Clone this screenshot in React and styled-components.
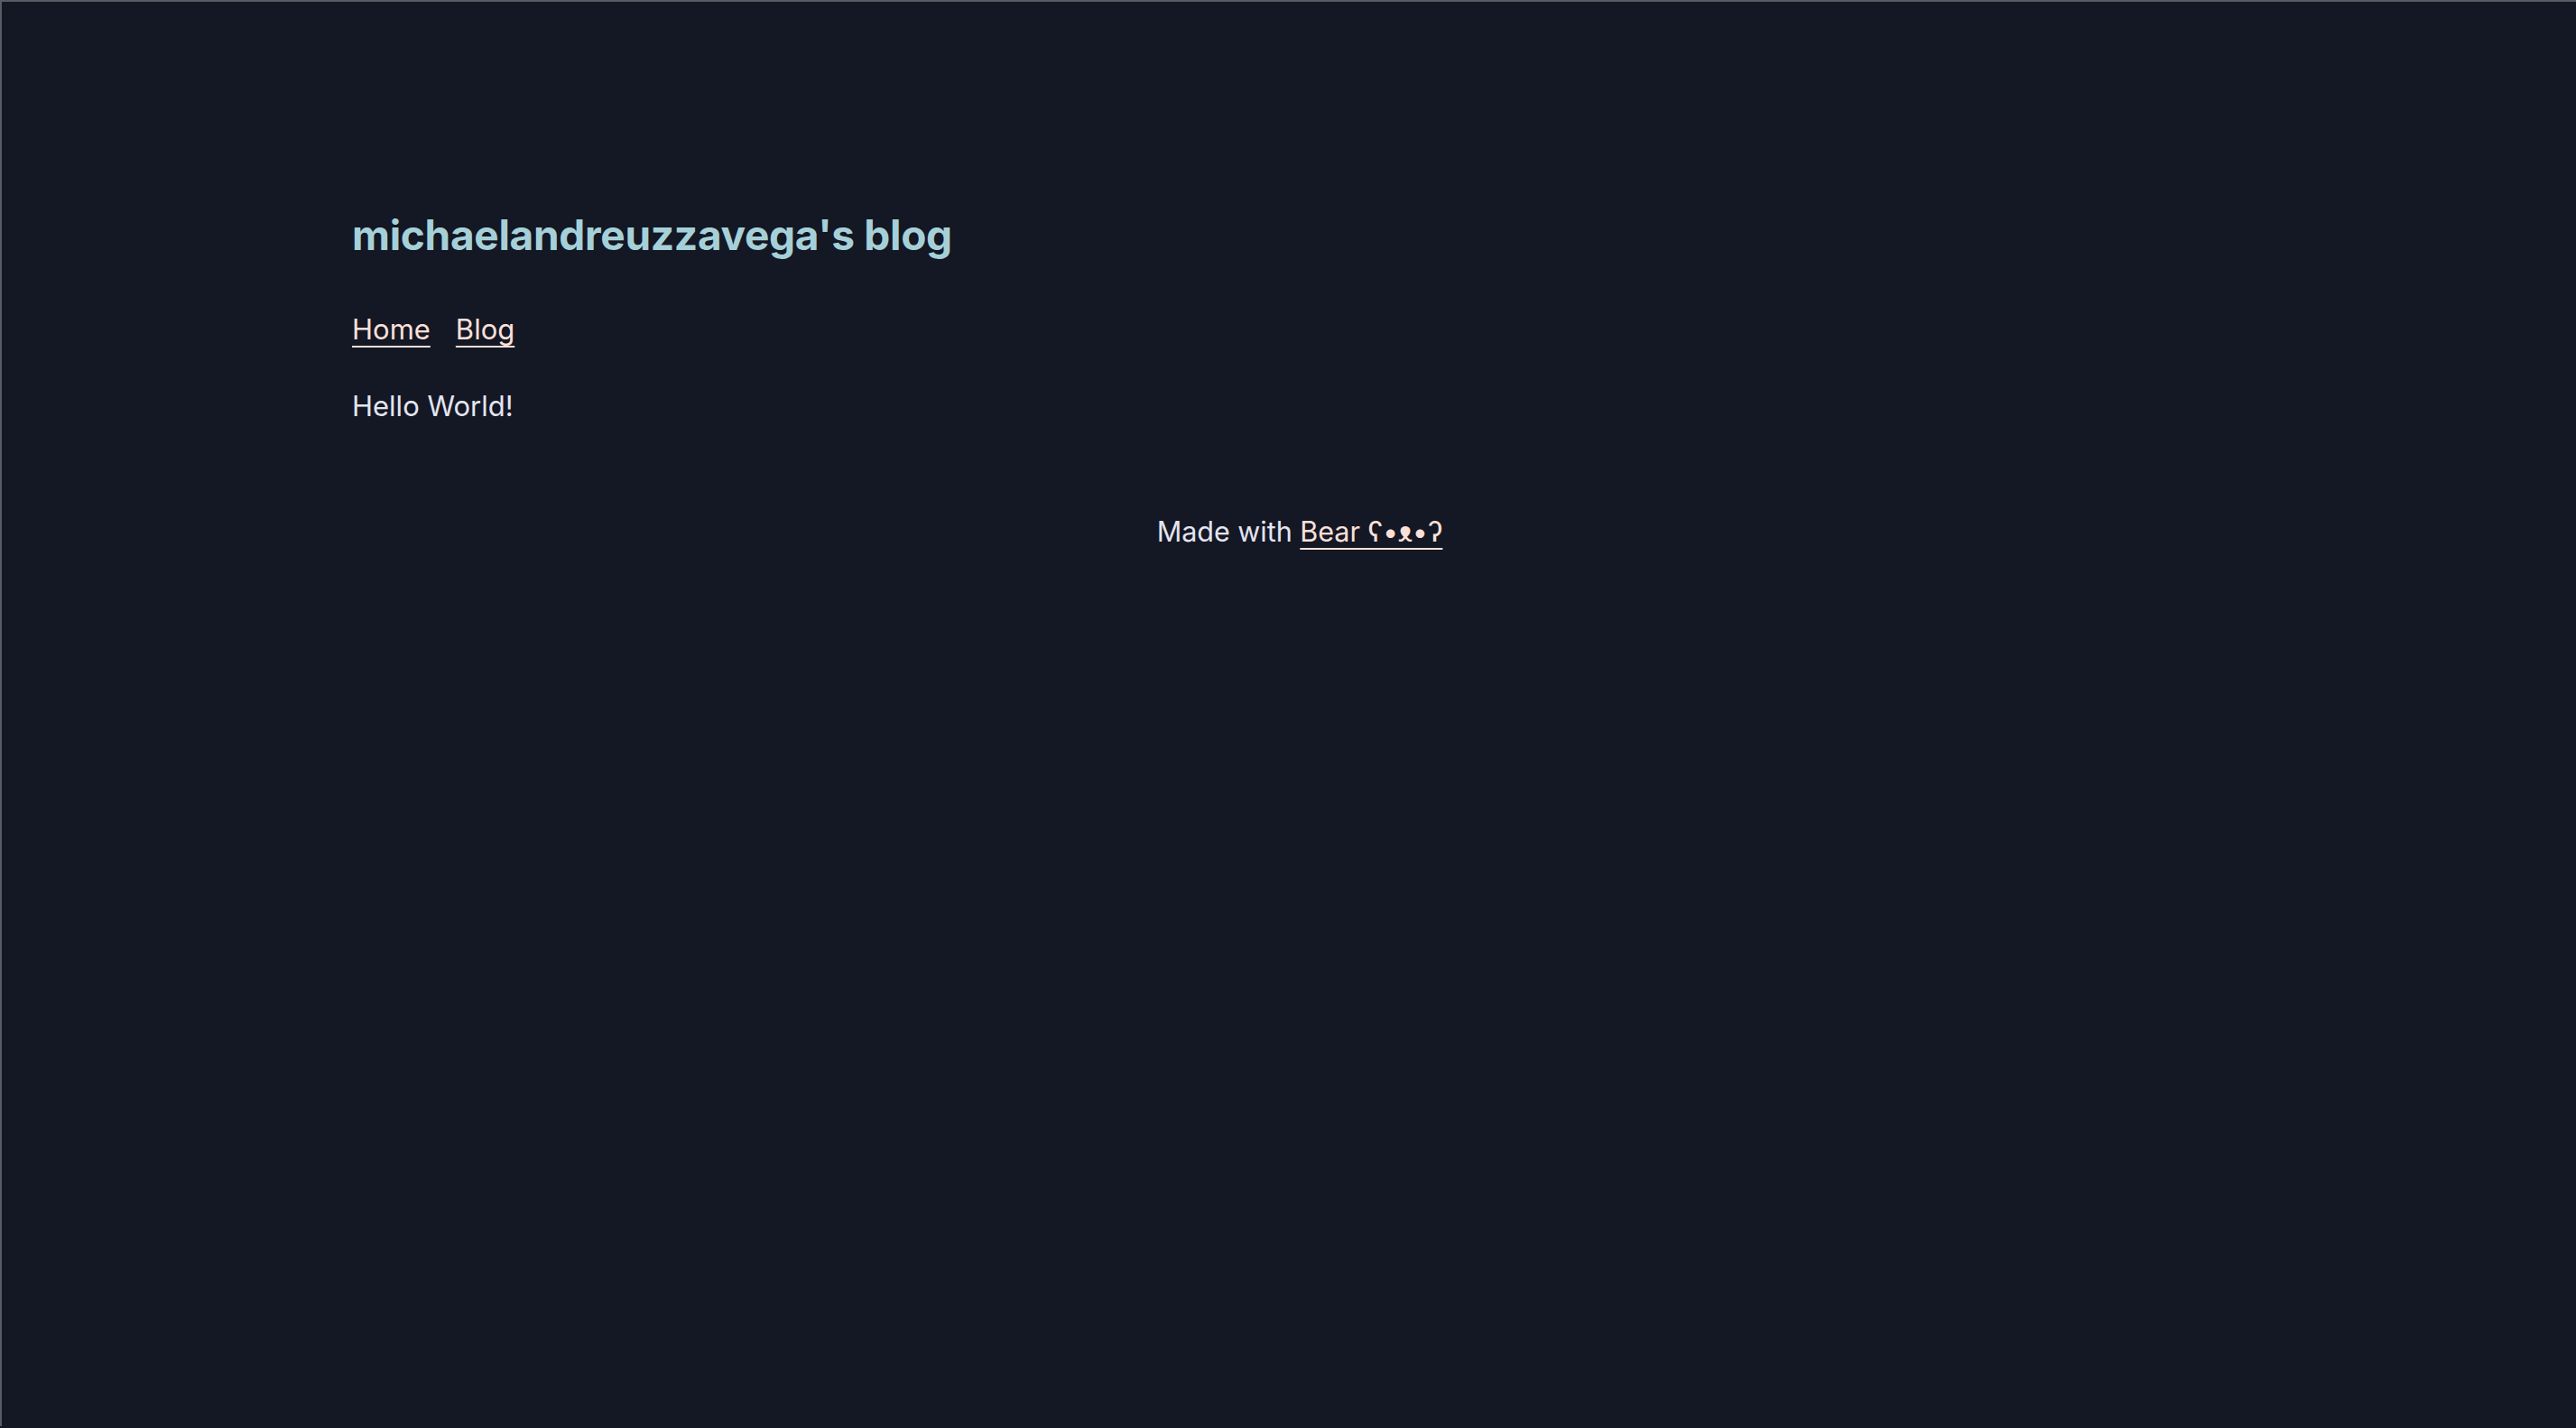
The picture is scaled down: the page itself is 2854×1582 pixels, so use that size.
import React from "react";
import styled, { createGlobalStyle } from "styled-components";

const GlobalStyle = createGlobalStyle`
  html, body {
    margin: 0;
    padding: 0;
    background: #141724;
  }
  body {
    font-family: Inter, "Noto Sans", "DejaVu Sans", sans-serif;
    color: #e3e5f0;
  }
`;

const Frame = styled.div`
  min-height: 1580px;
  border-top: 2px solid #595b62;
  border-left: 2px solid #595b62;
  box-sizing: border-box;
`;

const Page = styled.div`
  width: 2100px;
  margin-left: 388px;
  padding-top: 231px;
  font-size: 31px;
  line-height: 1.5;
`;

const Header = styled.header`
  display: flex;
  flex-direction: column;
  gap: 54px;
`;

const Title = styled.a`
  color: #a6d0d8;
  text-decoration: none;
  font-size: 46px;
  font-weight: 700;
  line-height: 1.2;
  letter-spacing: -0.3px;
`;

const Nav = styled.nav`
  display: flex;
  gap: 28px;
`;

const NavLink = styled.a`
  color: #fbe0d8;
  text-decoration: underline;
  text-underline-offset: 7px;
  text-decoration-thickness: 2px;
`;

const Main = styled.main`
  margin-top: 38px;
`;

const Footer = styled.footer`
  margin-top: 93px;
  text-align: center;
  font-size: 30.5px;
`;

const BearLink = styled.a`
  color: #fbe0d8;
  text-decoration: underline;
  text-underline-offset: 7px;
  text-decoration-thickness: 2px;
`;

export default function App() {
  return (
    <Frame>
      <GlobalStyle />
      <Page>
        <Header>
          <Title href="#">michaelandreuzzavega's blog</Title>
          <Nav>
            <NavLink href="#">Home</NavLink>
            <NavLink href="#">Blog</NavLink>
          </Nav>
        </Header>
        <Main>Hello World!</Main>
        <Footer>
          Made with <BearLink href="#">Bear ʕ•ᴥ•ʔ</BearLink>
        </Footer>
      </Page>
    </Frame>
  );
}
